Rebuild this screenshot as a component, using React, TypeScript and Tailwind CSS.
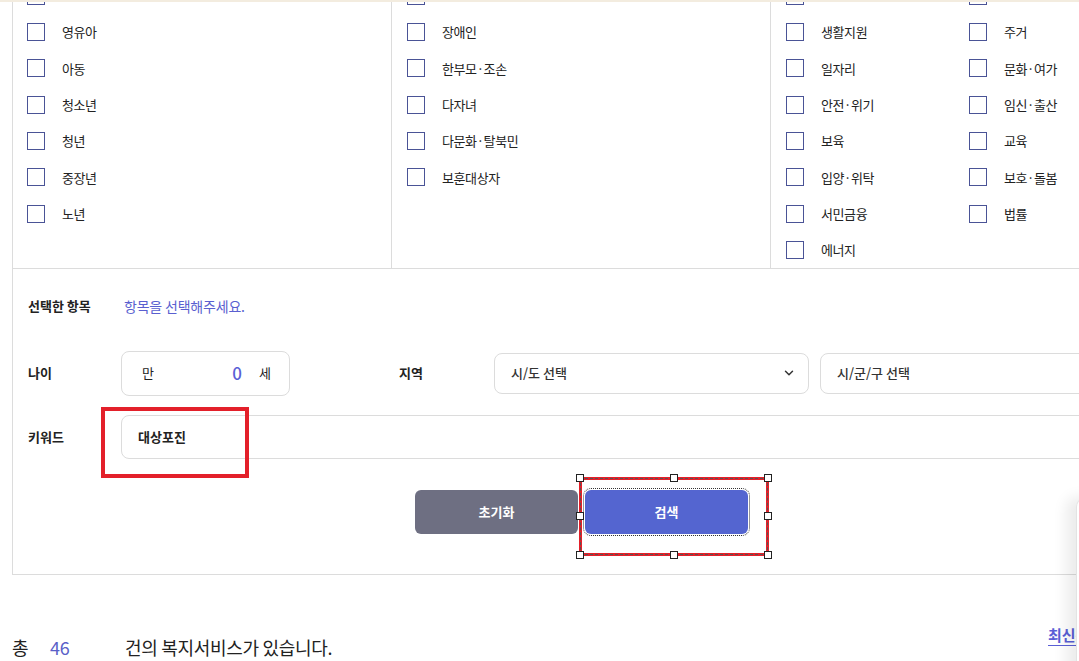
import React from "react";
import { ChevronDown } from "lucide-react";

const lifeCycle = ["", "영유아", "아동", "청소년", "청년", "중장년", "노년"];
const household = ["", "장애인", "한부모·조손", "다자녀", "다문화·탈북민", "보훈대상자"];
const topics = [
  "",
  "",
  "생활지원",
  "주거",
  "일자리",
  "문화·여가",
  "안전·위기",
  "임신·출산",
  "보육",
  "교육",
  "입양·위탁",
  "보호·돌봄",
  "서민금융",
  "법률",
  "에너지",
];

const Check: React.FC<{ label: string }> = ({ label }) => (
  <label className="flex h-[36.33px] items-center gap-[17px] text-[13px] tracking-[-0.4px] text-[#222]">
    <span className="h-[18px] w-[18px] shrink-0 border border-[#4a5396] bg-white"></span>
    {label && <span>{label}</span>}
  </label>
);

const Handle: React.FC<{ className: string }> = ({ className }) => (
  <span
    className={
      "absolute h-[8px] w-[8px] border border-[#222] bg-white " + className
    }
  ></span>
);

export default function App() {
  return (
    <div className="relative h-[661px] w-[1079px] overflow-hidden bg-white font-['Noto_Sans_CJK_KR','Noto_Sans',sans-serif] text-[#222]">
      <div className="absolute inset-x-0 top-0 z-10 h-[2px] bg-[#f3ecdf]"></div>

      <div className="ml-[12px] -mt-[22.5px] w-[1138px] border-b border-l border-[#dcdcdc]">
        {/* checkbox grid */}
        <div className="grid grid-cols-[379px_379px_1fr]">
          <div className="border-r border-[#dcdcdc] pl-[14px]">
            {lifeCycle.map((l, i) => (
              <Check key={"a" + i} label={l} />
            ))}
          </div>
          <div className="border-r border-[#dcdcdc] pl-[15px]">
            {household.map((l, i) => (
              <Check key={"b" + i} label={l} />
            ))}
          </div>
          <div className="grid grid-cols-[183px_1fr] content-start pl-[15px]">
            {topics.map((l, i) => (
              <Check key={"c" + i} label={l} />
            ))}
          </div>
        </div>

        {/* search form */}
        <div className="border-t border-[#dcdcdc] px-[15px] pb-[40px] pt-[27px]">
          <div className="flex h-[20px] items-center">
            <span className="w-[96px] text-[13px] font-bold">선택한 항목</span>
            <span className="text-[14px] tracking-[-0.2px] text-[#5a5fd0]">
              항목을 선택해주세요.
            </span>
          </div>

          <div className="mt-[35px] flex h-[44px] items-center">
            <span className="w-[93px] text-[13px] font-bold">나이</span>
            <div className="flex h-[45px] w-[169px] items-center rounded-[8px] border border-[#dcdcdc] pl-[20px] pr-[18px] text-[13px]">
              <span>만</span>
              <span className="ml-auto mr-[17px] text-[17px] font-medium text-[#5a5fd6]">
                0
              </span>
              <span>세</span>
            </div>
            <span className="ml-[109px] w-[95px] text-[13px] font-bold">지역</span>
            <div className="flex h-[41px] w-[315px] items-center rounded-[8px] border border-[#dcdcdc] pl-[16px] pr-[12px] text-[13px] font-medium text-[#333]">
              <span>시/도 선택</span>
              <ChevronDown className="ml-auto h-[14px] w-[14px]" strokeWidth={2.5} />
            </div>
            <div className="ml-[11px] flex h-[41px] flex-1 items-center rounded-[8px] border border-[#dcdcdc] pl-[16px] text-[13px] font-medium text-[#333]">
              <span>시/군/구 선택</span>
            </div>
          </div>

          <div className="mt-[20px] flex h-[44px] items-center">
            <span className="w-[93px] text-[13px] font-bold">키워드</span>
            <div className="flex h-[44px] flex-1 items-center rounded-[8px] border border-[#dcdcdc] pl-[16px] text-[13px] font-bold">
              대상포진
            </div>
          </div>

          <div className="mt-[31px] flex justify-center gap-[7px]">
            <button className="h-[44px] w-[163px] rounded-[6px] bg-[#6e6f82] text-[13px] font-bold text-white">
              초기화
            </button>
            <button className="h-[44px] w-[163px] rounded-[6px] bg-[#5465d0] text-[13px] font-bold text-white outline-1 outline-offset-1 outline-dotted outline-[#333]">
              검색
            </button>
          </div>
        </div>
      </div>

      {/* result count */}
      <div className="ml-[12px] mt-[49px] flex w-[1138px] items-start">
        <div className="mt-[10px] flex text-[18px] leading-[26px] tracking-[-0.3px]">
          <span className="w-[38px]">총</span>
          <span className="w-[75px] text-[#5a5fc8]">46</span>
          <span>건의 복지서비스가 있습니다.</span>
        </div>
        <div className="ml-auto w-[102px] text-[15px] font-bold leading-[22px] text-[#5a5fd6]">
          <span className="underline underline-offset-[4px]">최신순</span>
        </div>
      </div>

      {/* side panel peeking in */}
      <div className="absolute left-[1076px] top-[497px] h-[200px] w-[120px] rounded-tl-[10px] border-l border-t border-[#e3e3e3] bg-white shadow-[-10px_0_14px_rgba(0,0,0,0.08)]"></div>

      {/* annotation: keyword */}
      <div className="absolute left-[101px] top-[407px] h-[71px] w-[148px] border-[4px] border-[#e3202a]"></div>

      {/* annotation: selected search button */}
      <div className="absolute left-[579px] top-[477px] h-[79px] w-[190px]">
        <div className="absolute inset-0 border-[3px] border-[#e3202a]"></div>
        <div className="absolute inset-[1px] border border-dashed border-[#555]"></div>
        <Handle className="-left-[3px] -top-[3px]" />
        <Handle className="left-[91px] -top-[3px]" />
        <Handle className="-right-[3px] -top-[3px]" />
        <Handle className="-left-[3px] top-[35px]" />
        <Handle className="-right-[3px] top-[35px]" />
        <Handle className="-bottom-[3px] -left-[3px]" />
        <Handle className="-bottom-[3px] left-[91px]" />
        <Handle className="-bottom-[3px] -right-[3px]" />
      </div>
    </div>
  );
}
